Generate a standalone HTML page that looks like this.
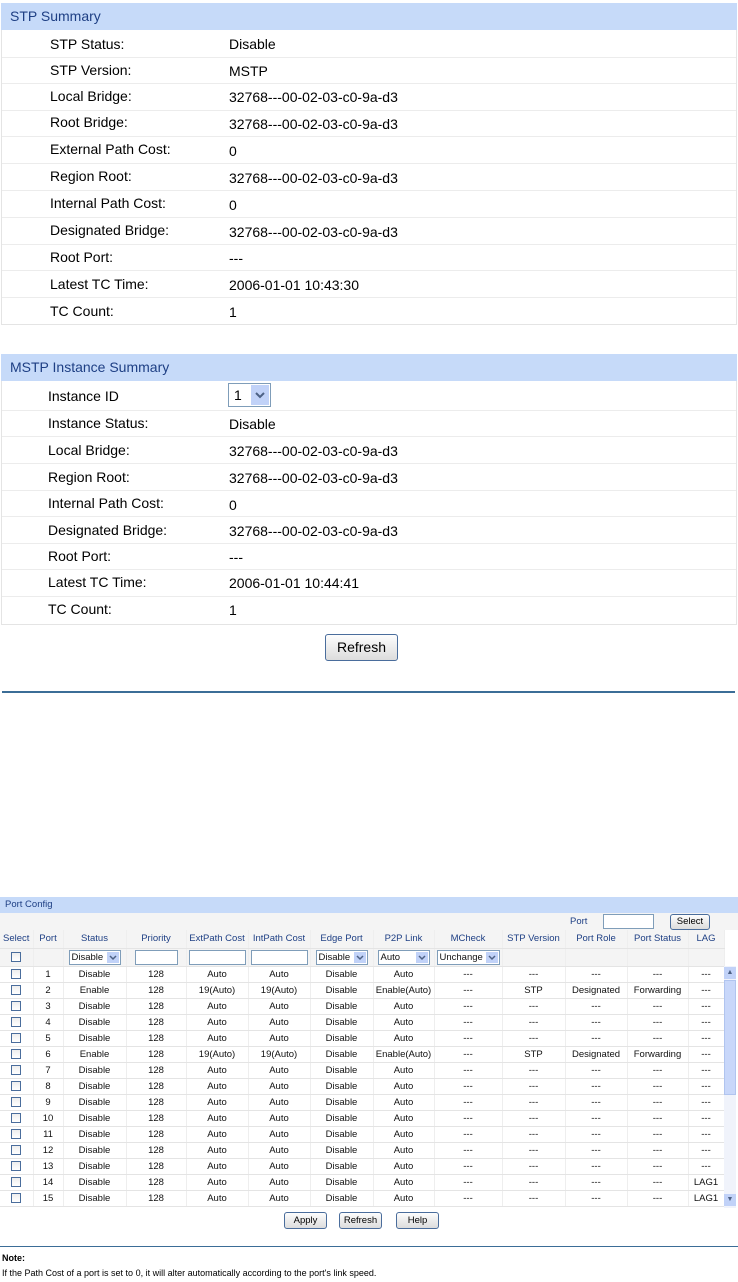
<!DOCTYPE html>
<html><head><meta charset="utf-8"><style>
*{margin:0;padding:0;box-sizing:border-box}
body{width:738px;height:1282px;background:#fff;font-family:"Liberation Sans",Arial,sans-serif;position:relative;overflow:hidden;color:#000}
.a{position:absolute;white-space:nowrap}
.box{position:absolute;left:1px;width:736px;border:1px solid #e4e4e4}
.hd{position:absolute;left:1px;width:736px;background:#c6daf9;color:#1e3f84;font-size:14px;padding-left:9px}
.ln{position:absolute;left:2px;width:734px;height:1px;background:#ececec}
.t{font-size:14px}
.btn{position:absolute;border:1px solid #4a6d9c;border-radius:3px;background:linear-gradient(#fdfdfd,#dcdcdc);text-align:center;font-size:14px}
table{position:absolute;left:0;top:930px;border-collapse:collapse;table-layout:fixed;font-size:9.5px;color:#111}
td{height:16px;text-align:center;border-bottom:1px solid #e4e4e4;border-right:1px solid #eee;padding:0;white-space:nowrap;overflow:hidden}
tr.h td{height:18px;color:#1e3f84;background:#f4f4f4}
tr.i td{height:18px;background:#f4f4f4}
.cb{display:inline-block;width:10px;height:10px;border:1px solid #4a6d9c;background:linear-gradient(#eee,#fff);vertical-align:middle}
.sel{display:inline-block;border:1px solid #7f9db9;height:15px;background:#fff;text-align:left;font-size:9.5px;line-height:13px;padding-left:2px;position:relative;vertical-align:middle}
.sel b{position:absolute;right:1px;top:1px;width:12px;height:11px;background:#c1d2f8}
.sel b svg,.big svg{position:absolute;left:0;top:0}
.inp{display:inline-block;border:1px solid #7f9db9;height:15px;background:#fff;vertical-align:middle}
</style></head><body>

<div class="box" style="top:3px;height:322px"></div>
<div class="hd" style="top:3px;height:27px;line-height:27px">STP Summary</div>
<div class="ln" style="top:57px"></div><div class="ln" style="top:83px"></div><div class="ln" style="top:110px"></div><div class="ln" style="top:136px"></div><div class="ln" style="top:163px"></div><div class="ln" style="top:190px"></div><div class="ln" style="top:217px"></div><div class="ln" style="top:244px"></div><div class="ln" style="top:270px"></div><div class="ln" style="top:297px"></div>
<div class="a t" style="left:50px;top:36px">STP Status:</div><div class="a t" style="left:229px;top:36px">Disable</div>
<div class="a t" style="left:50px;top:62px">STP Version:</div><div class="a t" style="left:229px;top:63px">MSTP</div>
<div class="a t" style="left:50px;top:88px">Local Bridge:</div><div class="a t" style="left:229px;top:89px">32768---00-02-03-c0-9a-d3</div>
<div class="a t" style="left:50px;top:114px">Root Bridge:</div><div class="a t" style="left:229px;top:116px">32768---00-02-03-c0-9a-d3</div>
<div class="a t" style="left:50px;top:141px">External Path Cost:</div><div class="a t" style="left:229px;top:143px">0</div>
<div class="a t" style="left:50px;top:168px">Region Root:</div><div class="a t" style="left:229px;top:170px">32768---00-02-03-c0-9a-d3</div>
<div class="a t" style="left:50px;top:195px">Internal Path Cost:</div><div class="a t" style="left:229px;top:197px">0</div>
<div class="a t" style="left:50px;top:222px">Designated Bridge:</div><div class="a t" style="left:229px;top:224px">32768---00-02-03-c0-9a-d3</div>
<div class="a t" style="left:50px;top:249px">Root Port:</div><div class="a t" style="left:229px;top:250px">---</div>
<div class="a t" style="left:50px;top:276px">Latest TC Time:</div><div class="a t" style="left:229px;top:277px">2006-01-01 10:43:30</div>
<div class="a t" style="left:50px;top:303px">TC Count:</div><div class="a t" style="left:229px;top:304px">1</div>

<div class="box" style="top:354px;height:271px"></div>
<div class="hd" style="top:354px;height:27px;line-height:27px">MSTP Instance Summary</div>
<div class="ln" style="top:410px"></div><div class="ln" style="top:436px"></div><div class="ln" style="top:463px"></div><div class="ln" style="top:490px"></div><div class="ln" style="top:516px"></div><div class="ln" style="top:543px"></div><div class="ln" style="top:569px"></div><div class="ln" style="top:596px"></div>
<div class="a t" style="left:48px;top:388px">Instance ID</div>
<div class="a" style="left:228px;top:383px;width:43px;height:24px;border:1px solid #7f9db9;background:#fff;font-size:14px;line-height:22px;padding-left:5px">1<span class="big" style="position:absolute;right:1px;top:1px;width:18px;height:20px;background:#c1d2f8"><svg width="18" height="20"><path d="M5 8 L9 12 L13 8" stroke="#4d6185" stroke-width="2" fill="none"/></svg></span></div>
<div class="a t" style="left:48px;top:415px">Instance Status:</div><div class="a t" style="left:229px;top:416px">Disable</div>
<div class="a t" style="left:48px;top:442px">Local Bridge:</div><div class="a t" style="left:229px;top:443px">32768---00-02-03-c0-9a-d3</div>
<div class="a t" style="left:48px;top:469px">Region Root:</div><div class="a t" style="left:229px;top:470px">32768---00-02-03-c0-9a-d3</div>
<div class="a t" style="left:48px;top:495px">Internal Path Cost:</div><div class="a t" style="left:229px;top:497px">0</div>
<div class="a t" style="left:48px;top:522px">Designated Bridge:</div><div class="a t" style="left:229px;top:523px">32768---00-02-03-c0-9a-d3</div>
<div class="a t" style="left:48px;top:548px">Root Port:</div><div class="a t" style="left:229px;top:549px">---</div>
<div class="a t" style="left:48px;top:574px">Latest TC Time:</div><div class="a t" style="left:229px;top:575px">2006-01-01 10:44:41</div>
<div class="a t" style="left:48px;top:601px">TC Count:</div><div class="a t" style="left:229px;top:602px">1</div>
<div class="btn" style="left:325px;top:634px;width:73px;height:27px;line-height:25px">Refresh</div>
<div class="a" style="left:2px;top:691px;width:733px;height:2px;background:#3b6d97"></div>

<div class="a" style="left:0;top:897px;width:738px;height:16px;background:#c6daf9;color:#1e3f84;font-size:9.5px;line-height:16px;padding-left:5px">Port Config</div>
<div class="a" style="left:0;top:913px;width:738px;height:17px;background:#f4f4f4"></div>
<div class="a" style="left:570px;top:916px;font-size:9.5px;color:#1e3f84">Port</div>
<div class="a" style="left:603px;top:914px;width:51px;height:15px;border:1px solid #7f9db9;background:#fff"></div>
<div class="btn" style="left:670px;top:914px;width:40px;height:16px;font-size:9.5px;line-height:14px">Select</div>

<table>
<colgroup><col style="width:33px"><col style="width:30px"><col style="width:63px"><col style="width:60px"><col style="width:62px"><col style="width:62px"><col style="width:63px"><col style="width:61px"><col style="width:68px"><col style="width:63px"><col style="width:62px"><col style="width:61px"><col style="width:36px"></colgroup>
<tr class="h"><td>Select</td><td>Port</td><td>Status</td><td>Priority</td><td>ExtPath Cost</td><td>IntPath Cost</td><td>Edge Port</td><td>P2P Link</td><td>MCheck</td><td>STP Version</td><td>Port Role</td><td>Port Status</td><td>LAG</td></tr>
<tr class="i"><td><span class="cb"></span></td><td></td><td><span class="sel" style="width:52px">Disable<b><svg width="12" height="11"><path d="M3 4 L6 7 L9 4" stroke="#4d6185" stroke-width="1.5" fill="none"/></svg></b></span></td><td><span class="inp" style="width:43px"></span></td><td><span class="inp" style="width:57px"></span></td><td><span class="inp" style="width:57px"></span></td><td><span class="sel" style="width:52px">Disable<b><svg width="12" height="11"><path d="M3 4 L6 7 L9 4" stroke="#4d6185" stroke-width="1.5" fill="none"/></svg></b></span></td><td><span class="sel" style="width:52px">Auto<b><svg width="12" height="11"><path d="M3 4 L6 7 L9 4" stroke="#4d6185" stroke-width="1.5" fill="none"/></svg></b></span></td><td><span class="sel" style="width:63px">Unchange<b><svg width="12" height="11"><path d="M3 4 L6 7 L9 4" stroke="#4d6185" stroke-width="1.5" fill="none"/></svg></b></span></td><td></td><td></td><td></td><td></td></tr>
<tr><td><span class="cb"></span></td><td>1</td><td>Disable</td><td>128</td><td>Auto</td><td>Auto</td><td>Disable</td><td>Auto</td><td>---</td><td>---</td><td>---</td><td>---</td><td>---</td></tr>
<tr><td><span class="cb"></span></td><td>2</td><td>Enable</td><td>128</td><td>19(Auto)</td><td>19(Auto)</td><td>Disable</td><td>Enable(Auto)</td><td>---</td><td>STP</td><td>Designated</td><td>Forwarding</td><td>---</td></tr>
<tr><td><span class="cb"></span></td><td>3</td><td>Disable</td><td>128</td><td>Auto</td><td>Auto</td><td>Disable</td><td>Auto</td><td>---</td><td>---</td><td>---</td><td>---</td><td>---</td></tr>
<tr><td><span class="cb"></span></td><td>4</td><td>Disable</td><td>128</td><td>Auto</td><td>Auto</td><td>Disable</td><td>Auto</td><td>---</td><td>---</td><td>---</td><td>---</td><td>---</td></tr>
<tr><td><span class="cb"></span></td><td>5</td><td>Disable</td><td>128</td><td>Auto</td><td>Auto</td><td>Disable</td><td>Auto</td><td>---</td><td>---</td><td>---</td><td>---</td><td>---</td></tr>
<tr><td><span class="cb"></span></td><td>6</td><td>Enable</td><td>128</td><td>19(Auto)</td><td>19(Auto)</td><td>Disable</td><td>Enable(Auto)</td><td>---</td><td>STP</td><td>Designated</td><td>Forwarding</td><td>---</td></tr>
<tr><td><span class="cb"></span></td><td>7</td><td>Disable</td><td>128</td><td>Auto</td><td>Auto</td><td>Disable</td><td>Auto</td><td>---</td><td>---</td><td>---</td><td>---</td><td>---</td></tr>
<tr><td><span class="cb"></span></td><td>8</td><td>Disable</td><td>128</td><td>Auto</td><td>Auto</td><td>Disable</td><td>Auto</td><td>---</td><td>---</td><td>---</td><td>---</td><td>---</td></tr>
<tr><td><span class="cb"></span></td><td>9</td><td>Disable</td><td>128</td><td>Auto</td><td>Auto</td><td>Disable</td><td>Auto</td><td>---</td><td>---</td><td>---</td><td>---</td><td>---</td></tr>
<tr><td><span class="cb"></span></td><td>10</td><td>Disable</td><td>128</td><td>Auto</td><td>Auto</td><td>Disable</td><td>Auto</td><td>---</td><td>---</td><td>---</td><td>---</td><td>---</td></tr>
<tr><td><span class="cb"></span></td><td>11</td><td>Disable</td><td>128</td><td>Auto</td><td>Auto</td><td>Disable</td><td>Auto</td><td>---</td><td>---</td><td>---</td><td>---</td><td>---</td></tr>
<tr><td><span class="cb"></span></td><td>12</td><td>Disable</td><td>128</td><td>Auto</td><td>Auto</td><td>Disable</td><td>Auto</td><td>---</td><td>---</td><td>---</td><td>---</td><td>---</td></tr>
<tr><td><span class="cb"></span></td><td>13</td><td>Disable</td><td>128</td><td>Auto</td><td>Auto</td><td>Disable</td><td>Auto</td><td>---</td><td>---</td><td>---</td><td>---</td><td>---</td></tr>
<tr><td><span class="cb"></span></td><td>14</td><td>Disable</td><td>128</td><td>Auto</td><td>Auto</td><td>Disable</td><td>Auto</td><td>---</td><td>---</td><td>---</td><td>---</td><td>LAG1</td></tr>
<tr><td><span class="cb"></span></td><td>15</td><td>Disable</td><td>128</td><td>Auto</td><td>Auto</td><td>Disable</td><td>Auto</td><td>---</td><td>---</td><td>---</td><td>---</td><td>LAG1</td></tr>
</table>
<div class="a" style="left:724px;top:966px;width:12px;height:242px;background:#f0f3fb"></div>
<div class="a" style="left:724px;top:967px;width:12px;height:12px;background:#c1d2f8;font-size:7px;color:#4d6185;text-align:center;line-height:12px">&#9650;</div>
<div class="a" style="left:724px;top:980px;width:12px;height:115px;background:#c8d7fa;border:1px solid #b0c4ef"></div>
<div class="a" style="left:724px;top:1194px;width:12px;height:12px;background:#c1d2f8;font-size:7px;color:#4d6185;text-align:center;line-height:12px">&#9660;</div>

<div class="btn" style="left:284px;top:1212px;width:43px;height:17px;font-size:9.5px;line-height:15px">Apply</div>
<div class="btn" style="left:339px;top:1212px;width:43px;height:17px;font-size:9.5px;line-height:15px">Refresh</div>
<div class="btn" style="left:396px;top:1212px;width:43px;height:17px;font-size:9.5px;line-height:15px">Help</div>
<div class="a" style="left:0;top:1246px;width:738px;height:1px;background:#3b6d97"></div>
<div class="a" style="left:2px;top:1253px;font-size:9px;font-weight:bold">Note:</div>
<div class="a" style="left:2px;top:1268px;font-size:9px">If the Path Cost of a port is set to 0, it will alter automatically according to the port's link speed.</div>
</body></html>
